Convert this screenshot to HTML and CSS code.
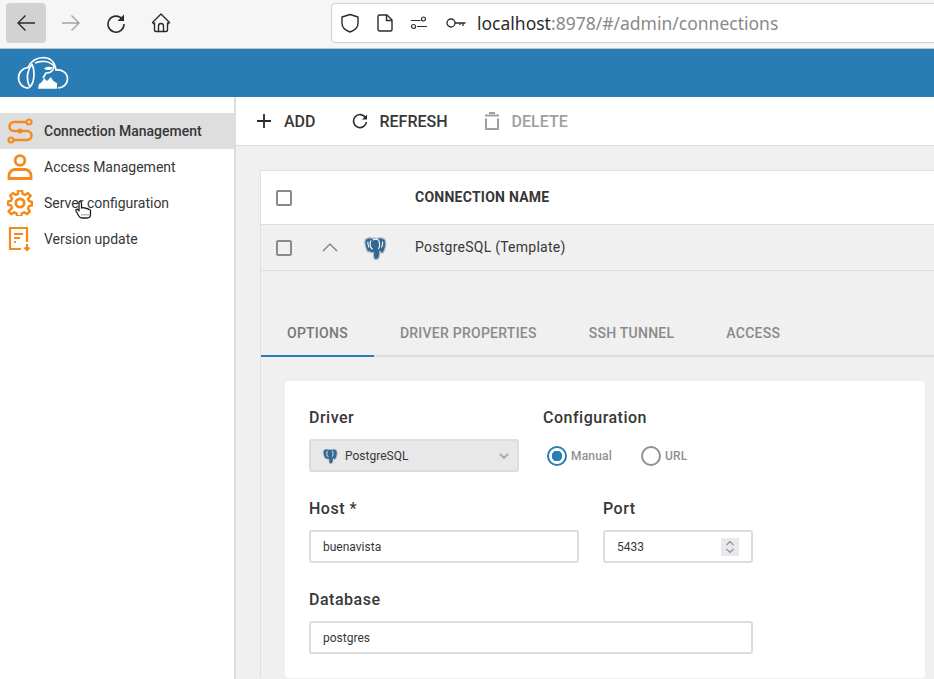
FILE: index.html
```html
<!DOCTYPE html>
<html lang="en">
<head>
  <meta charset="UTF-8">
  <meta name="viewport" content="width=device-width, initial-scale=1.0">
  <title>CloudBeaver Administration</title>
  <link rel="stylesheet" href="styles.css">
</head>
<body>

<div class="browser-bar">
  <div class="nav-buttons">
    <button class="nav-btn active">
      <svg width="20" height="20" viewBox="0 0 20 20" fill="none" stroke="#2b2b2b" stroke-width="1.4"><path d="M19 10H2M9.5 2.5 2 10l7.5 7.5"/></svg>
    </button>
    <button class="nav-btn">
      <svg width="20" height="20" viewBox="0 0 20 20" fill="none" stroke="#a3a3a3" stroke-width="1.4"><path d="M1 10h17M10.5 2.5 18 10l-7.5 7.5"/></svg>
    </button>
    <button class="nav-btn">
      <svg width="20" height="20" viewBox="0 0 20 20" fill="none" stroke="#2b2b2b" stroke-width="1.6"><path d="M16.5 6.5A8 8 0 1 0 18 11"/><path d="M18 1.5V8h-6.5z" fill="#2b2b2b" stroke="none"/></svg>
    </button>
    <button class="nav-btn">
      <svg width="20" height="20" viewBox="0 0 20 20" fill="none" stroke="#2b2b2b" stroke-width="1.4"><path d="M10 1 1.5 9.500l1.200 1.200.8-.7V17a1.500 1.500 0 0 0 1.500 1.500h10A1.500 1.500 0 0 0 16.500 17V10l.8.700 1.200-1.200z" stroke-linejoin="round"/><path d="M7.5 18.500V13a2.500 2.500 0 0 1 5 0v5.500"/></svg>
    </button>
  </div>
  <div class="url-bar">
    <svg width="20" height="20" viewBox="0 0 20 20" fill="none" stroke="#2b2b2b" stroke-width="1.4"><path d="M10 1.5 2 4v6c0 4.500 3.500 7.500 8 9 4.500-1.500 8-4.500 8-9V4z" stroke-linejoin="round"/></svg>
    <svg class="url-icon-file" width="16" height="18" viewBox="0 0 16 18" fill="none" stroke="#2b2b2b" stroke-width="1.4"><path d="M2.5 1H10l5 5v9.500a1.500 1.500 0 0 1-1.500 1.500h-11A1.500 1.500 0 0 1 1 15.500v-13A1.500 1.500 0 0 1 2.500 1z" stroke-linejoin="round"/><path d="M9.5 1v5.500H15"/></svg>
    <svg class="url-icon-perm" width="18" height="14" viewBox="0 0 18 14" fill="none" stroke="#2b2b2b" stroke-width="1.2"><circle cx="13.5" cy="3" r="2"/><circle cx="3.5" cy="10.500" r="2"/><path d="M1 4.5h9.500M7 10.500h10"/></svg>
    <svg class="url-icon-key" width="20" height="12" viewBox="0 0 20 12" fill="none" stroke="#2b2b2b" stroke-width="1.3"><circle cx="5" cy="6" r="4"/><path d="M9 6h10.500M17 6v3M14 6v2"/></svg>
    <span class="url-text">localhost<span class="url-dim">:8978/#/admin/connections</span></span>
  </div>
</div>

<header class="top-bar">
  <svg class="logo" width="52" height="34" viewBox="0 0 52 34" fill="none" stroke="#fff" stroke-width="1.7">
    <path d="M12 32C5 32 1.500 27 1.500 22 1.500 16 6 12 11 11.500 14 5 20 1.500 27 1.500 34 2 38 7 39 14c6-1 11.500 3 11.500 9 0 5-4.500 9-9.500 9"/>
    <path d="M15 8c-4 5-7 14-2 23 3-3 4-8 4-13 0-4-1-8-2-10"/>
    <path d="M18 7c6-3 15-2 19 3 0 4-3 7-8 7l-3 5"/>
    <path d="M21 32.800l1-4.800c2-1 4-3 5-6l3 3 4-4c1 3 3 5 6 6v5.800z" fill="#fff" stroke="none"/>
    <path d="M27 12.500c2-2 6-2.500 9-1-1 3-6 3.500-9 1z" fill="#fff" stroke="none"/>
  </svg>
</header>

<div class="layout">
  <aside class="sidebar">
    <div class="side-item selected">
      <svg class="side-icon" width="26" height="26" viewBox="0 0 26 26" fill="none" stroke="#f48a1c" stroke-width="2.2"><circle cx="22" cy="4" r="2.500"/><circle cx="4" cy="22" r="2.500"/><circle cx="13" cy="13" r="2.500" fill="#f48a1c" stroke="none"/><path d="M19.5 4H7a4.500 4.500 0 0 0 0 9h13a4.500 4.500 0 0 1 0 9H6.500" stroke-width="2.6"/></svg>
      <span>Connection Management</span>
    </div>
    <div class="side-item">
      <svg class="side-icon" width="26" height="26" viewBox="0 0 26 26" fill="none" stroke="#f48a1c" stroke-width="2.8"><circle cx="13" cy="6.500" r="4.800"/><path d="M2 24.500v-3c0-3.500 3-6 6-6h10c3 0 6 2.500 6 6v3z"/></svg>
      <span>Access Management</span>
    </div>
    <div class="side-item">
      <svg class="side-icon" width="26" height="26" viewBox="0 0 26 26" fill="none" stroke="#f48a1c" stroke-width="2.4"><circle cx="13" cy="13" r="4.200" stroke-width="2.8"/><path d="M11 1.500h4l.7 3.400 2.300 1 2.900-1.900 2.800 2.800L21 9.700l1 2.300 3 .8v3.700l-3 .7-1 2.300 1.900 2.900-2.800 2.800-2.900-1.900-2.300 1-.7 3h-4l-.7-3-2.300-1-2.900 1.900-2.800-2.800L5 18.800 4 16.500 1 15.800v-3.300l3-.7 1-2.300-1.900-2.800L5.900 4 8.800 5.900l2.300-1z" transform="translate(0 -1)" stroke-linejoin="round"/></svg>
      <span>Server configuration</span>
    </div>
    <div class="side-item">
      <svg class="side-icon" width="26" height="26" viewBox="0 0 26 26" fill="none" stroke="#f48a1c" stroke-width="2.2"><path d="M14 23H3V2h17v14"/><path d="M7 8h9M7 12h6M7 16h2M20 18v6M17.500 21.500 20 24l2.500-2.500"/></svg>
      <span>Version update</span>
    </div>
  </aside>

  <main class="main">
    <div class="toolbar">
      <button class="tool-btn">
        <svg width="16" height="16" viewBox="0 0 16 16" stroke="#2b2b2b" stroke-width="1.8"><path d="M8 1v14M1 8h14"/></svg>
        <span>ADD</span>
      </button>
      <button class="tool-btn">
        <svg width="16" height="16" viewBox="0 0 16 16" fill="none" stroke="#2b2b2b" stroke-width="1.6"><path d="M13.5 4.500A6.500 6.500 0 1 0 14.500 9"/><path d="M15 1.500v5h-5z" fill="#2b2b2b" stroke="none"/></svg>
        <span>REFRESH</span>
      </button>
      <button class="tool-btn disabled">
        <svg width="16" height="18" viewBox="0 0 16 18" fill="none" stroke="#a0a0a0" stroke-width="2"><path d="M1 3.500h14M5 1h6M2 6.500V17h12V6.500"/></svg>
        <span>DELETE</span>
      </button>
    </div>

    <div class="content">
      <div class="table">
        <div class="table-row table-head">
          <span class="check"></span>
          <span class="cell-name">CONNECTION NAME</span>
        </div>
        <div class="table-row table-item">
          <span class="check"></span>
          <svg class="chevron" width="16" height="9" viewBox="0 0 16 9" fill="none" stroke="#757575" stroke-width="1.2"><path d="M1 8l7-7 7 7"/></svg>
          <svg class="pg-logo" width="24" height="24" viewBox="0 0 24 24"><path d="M2 5C2 2 7 1 10 2.500c1-.5 3-.5 4 0C17 1 22 2 22.500 5.500c.5 3-.5 8-2 10.500-1 1.500-3 1-3.500-.5l-.5 2.500c0 3-1 5.500-3.500 5.500-1.500 0-2.500-2-2.500-4.500v-2.500c-2 .5-3 .5-4-1-1 1-2 0-2.500-1C2.500 11 1.500 8 2 5z" fill="#336791" stroke="#a9b6c0" stroke-width="1.200"/><path d="M8 4.500c-1.500 3-1 7 1.500 9M15.500 4c1.500 3 1.500 6 0 9M10 4c2-1 4-1 5 0M5 5.500c-.5 2 0 4 1 6M19.500 5.500c.5 2 0 4-1 6" fill="none" stroke="#fff" stroke-width="1.100"/></svg>
          <span class="cell-name regular">PostgreSQL (Template)</span>
        </div>
        <div class="detail">
          <div class="tabs">
            <span class="tab active">OPTIONS</span>
            <span class="tab">DRIVER PROPERTIES</span>
            <span class="tab">SSH TUNNEL</span>
            <span class="tab">ACCESS</span>
          </div>
          <div class="card">
            <div class="form-row">
              <div class="field field-driver">
                <label>Driver</label>
                <div class="select">
                  <svg width="16" height="16" viewBox="0 0 24 24"><path d="M2 5C2 2 7 1 10 2.500c1-.5 3-.5 4 0C17 1 22 2 22.500 5.500c.5 3-.5 8-2 10.500-1 1.500-3 1-3.500-.5l-.5 2.500c0 3-1 5.500-3.500 5.500-1.500 0-2.500-2-2.500-4.500v-2.500c-2 .5-3 .5-4-1-1 1-2 0-2.500-1C2.500 11 1.500 8 2 5z" fill="#336791" stroke="#a9b6c0" stroke-width="1.200"/><path d="M8 4.500c-1.500 3-1 7 1.500 9M15.500 4c1.500 3 1.500 6 0 9" fill="none" stroke="#fff" stroke-width="1.300"/></svg>
                  <span class="select-value">PostgreSQL</span>
                  <svg class="select-arrow" width="10" height="6" viewBox="0 0 10 6" fill="none" stroke="#a8a8a8" stroke-width="1.8"><path d="M1 1l4 4 4-4"/></svg>
                </div>
              </div>
              <div class="field">
                <label>Configuration</label>
                <div class="radios">
                  <span class="radio checked"><span class="radio-circle"></span>Manual</span>
                  <span class="radio"><span class="radio-circle"></span>URL</span>
                </div>
              </div>
            </div>
            <div class="form-row">
              <div class="field field-host">
                <label>Host *</label>
                <div class="input">buenavista</div>
              </div>
              <div class="field field-port">
                <label>Port</label>
                <div class="input">5433
                  <span class="spinner">
                    <svg width="10" height="16" viewBox="0 0 10 16" fill="none" stroke="#8c8c94" stroke-width="1.1"><path d="M1.500 6 5 2.500 8.500 6M1.500 10 5 13.500 8.500 10"/></svg>
                  </span>
                </div>
              </div>
            </div>
            <div class="form-row">
              <div class="field field-db">
                <label>Database</label>
                <div class="input">postgres</div>
              </div>
            </div>
          </div>
        </div>
      </div>
    </div>
  </main>
</div>

<svg class="hand-cursor" width="18" height="19" viewBox="0 0 18 19"><path d="M4 2c.9-1 2.500-.6 2.500 1v5l1.200-.3c.8-.2 1.400 0 1.600.5.700-.4 1.700-.2 2 .4.800-.3 1.700 0 1.900.7.900-.2 2.300.2 2.300 1.400V14c0 2.500-1.200 4-3.500 4H7c-1.500 0-2.500-.8-3.200-2L1 11c-.6-1.200.9-2.300 2-1.300l1 1z" fill="#fff" stroke="#1c1c1c" stroke-width="1.300" stroke-linejoin="round"/><path d="M7 14v1.500M9 14v1.500M11 14v1.500M13 14v1.500" stroke="#666" stroke-width=".9"/></svg>

</body>
</html>
```

FILE: styles.css
```css
* {
  box-sizing: border-box;
}

html, body {
  height: 679px;
}

body {
  margin: 0;
  overflow: hidden;
  font-family: 'Roboto', sans-serif;
  color: #373737;
  background-color: #fff;
}

/* browser chrome */
.browser-bar {
  display: flex;
  align-items: center;
  height: 49px;
  padding: 0 0 2px 6px;
  background-color: #f6f6f6;
  border-bottom: 1px solid #c4c4c4;
}

.nav-buttons {
  display: flex;
  gap: 5px;
}

.nav-btn {
  display: flex;
  align-items: center;
  justify-content: center;
  width: 40px;
  height: 40px;
  padding: 0;
  border: none;
  border-radius: 4px;
  background: none;
}

.nav-btn.active {
  background-color: #d2d2d2;
}

.url-bar {
  display: flex;
  align-items: center;
  flex: 1;
  height: 40px;
  margin-left: 150px;
  margin-right: -10px;
  padding-left: 8px;
  background-color: #fff;
  border: 1px solid #cfcfcf;
  border-radius: 4px;
}

.url-icon-file {
  margin-left: 17px;
}

.url-icon-perm {
  margin-left: 17px;
}

.url-icon-key {
  margin-left: 18px;
}

.url-text {
  margin-left: 11px;
  font-family: 'Noto Sans', sans-serif;
  font-size: 17.5px;
  color: #2b2b2b;
  white-space: nowrap;
}

.url-dim {
  color: #8a8a8a;
}

/* app header */
.top-bar {
  display: flex;
  align-items: center;
  height: 48px;
  padding-left: 17px;
  background-color: #2a7cb4;
}

.layout {
  display: flex;
  height: 582px;
}

.sidebar {
  flex: none;
  width: 236px;
  padding-top: 16px;
  background-color: #fff;
  border-right: 2px solid #dddddd;
}

.side-item {
  display: flex;
  align-items: center;
  height: 36px;
  padding-left: 7px;
  font-size: 14px;
  white-space: nowrap;
}

.side-item.selected {
  background-color: #dedede;
  font-weight: 500;
}

.side-icon {
  flex: none;
  margin-right: 11px;
}

.main {
  flex: 1;
  min-width: 0;
  background-color: #f0f0f0;
}

.toolbar {
  display: flex;
  align-items: center;
  gap: 36px;
  height: 49px;
  padding-left: 20px;
  background-color: #fff;
  border-bottom: 1px solid #dddddd;
}

.tool-btn {
  display: flex;
  align-items: center;
  gap: 12px;
  padding: 0;
  border: none;
  background: none;
  font-family: inherit;
  font-size: 16px;
  font-weight: 500;
  color: #373737;
}

.tool-btn.disabled {
  color: #a0a0a0;
}

.content {
  width: 698px;
  padding: 24px 0 0 24px;
}

.table {
  border-top: 1px solid #e0e0e0;
  border-left: 1px solid #e0e0e0;
}

.table-row {
  display: flex;
  align-items: center;
  padding-left: 15px;
  border-bottom: 1px solid #dddddd;
}

.table-head {
  height: 54px;
  background-color: #fff;
}

.table-item {
  height: 46px;
  background-color: #f0f0f0;
}

.check {
  flex: none;
  width: 16px;
  height: 16px;
  border: 2px solid #8a8a8a;
  border-radius: 2px;
}

.chevron {
  flex: none;
  margin-left: 30px;
}

.pg-logo {
  flex: none;
  margin-left: 25px;
}

.cell-name {
  margin: -2px 0 0 123px;
  font-size: 14px;
  font-weight: 700;
  letter-spacing: 0.25px;
}

.cell-name.regular {
  margin-left: 28px;
  font-weight: 400;
}

.detail {
  padding-top: 50px;
  background-color: #f0f0f0;
}

.tabs {
  display: flex;
  height: 36px;
  border-bottom: 2px solid #dddddd;
}

.tab {
  height: 36px;
  padding: 4px 26px 0;
  font-size: 14px;
  font-weight: 500;
  letter-spacing: 0.25px;
  color: #8a8a8a;
}

.tab.active {
  color: #777;
  border-bottom: 2px solid #2a7cb4;
}

.card {
  display: flex;
  flex-direction: column;
  gap: 26px;
  width: 640px;
  height: 297px;
  margin: 24px 0 0 24px;
  padding: 26px 24px;
  background-color: #fff;
  border-radius: 4px;
}

.form-row {
  display: flex;
  gap: 24px;
}

.field label {
  display: block;
  margin-bottom: 11px;
  font-size: 16px;
  line-height: 21px;
  font-weight: 500;
  letter-spacing: 0.5px;
}

.field-driver {
  width: 210px;
}

.field-host {
  width: 270px;
}

.field-port {
  width: 150px;
}

.field-db {
  width: 444px;
}

.select {
  display: flex;
  align-items: center;
  height: 33px;
  padding: 0 8px 0 11px;
  background-color: #e8e8e8;
  border: 2px solid #dddddd;
  border-radius: 3px;
  font-size: 12px;
}

.select-value {
  margin-left: 7px;
}

.select-arrow {
  margin-left: auto;
}

.radios {
  display: flex;
  align-items: center;
  gap: 29px;
  height: 33px;
  padding-left: 4px;
}

.radio {
  display: flex;
  align-items: center;
  gap: 4px;
  font-size: 12px;
  font-weight: 500;
  letter-spacing: 0.2px;
  color: #909090;
}

.radio-circle {
  width: 20px;
  height: 20px;
  border: 2px solid #909090;
  border-radius: 50%;
}

.radio.checked .radio-circle {
  border-color: #2a7cb4;
  background: radial-gradient(circle, #2a7cb4 0 5px, #fff 5.5px);
}

.input {
  display: flex;
  align-items: center;
  justify-content: space-between;
  height: 33px;
  padding: 0 12px;
  background-color: #fff;
  border: 2px solid #dddddd;
  border-radius: 3px;
  font-size: 12px;
}

.spinner {
  display: flex;
  align-items: center;
  justify-content: center;
  width: 18px;
  height: 18px;
  background-color: #e9e9ed;
}

.hand-cursor {
  position: absolute;
  left: 75px;
  top: 200px;
}
```
